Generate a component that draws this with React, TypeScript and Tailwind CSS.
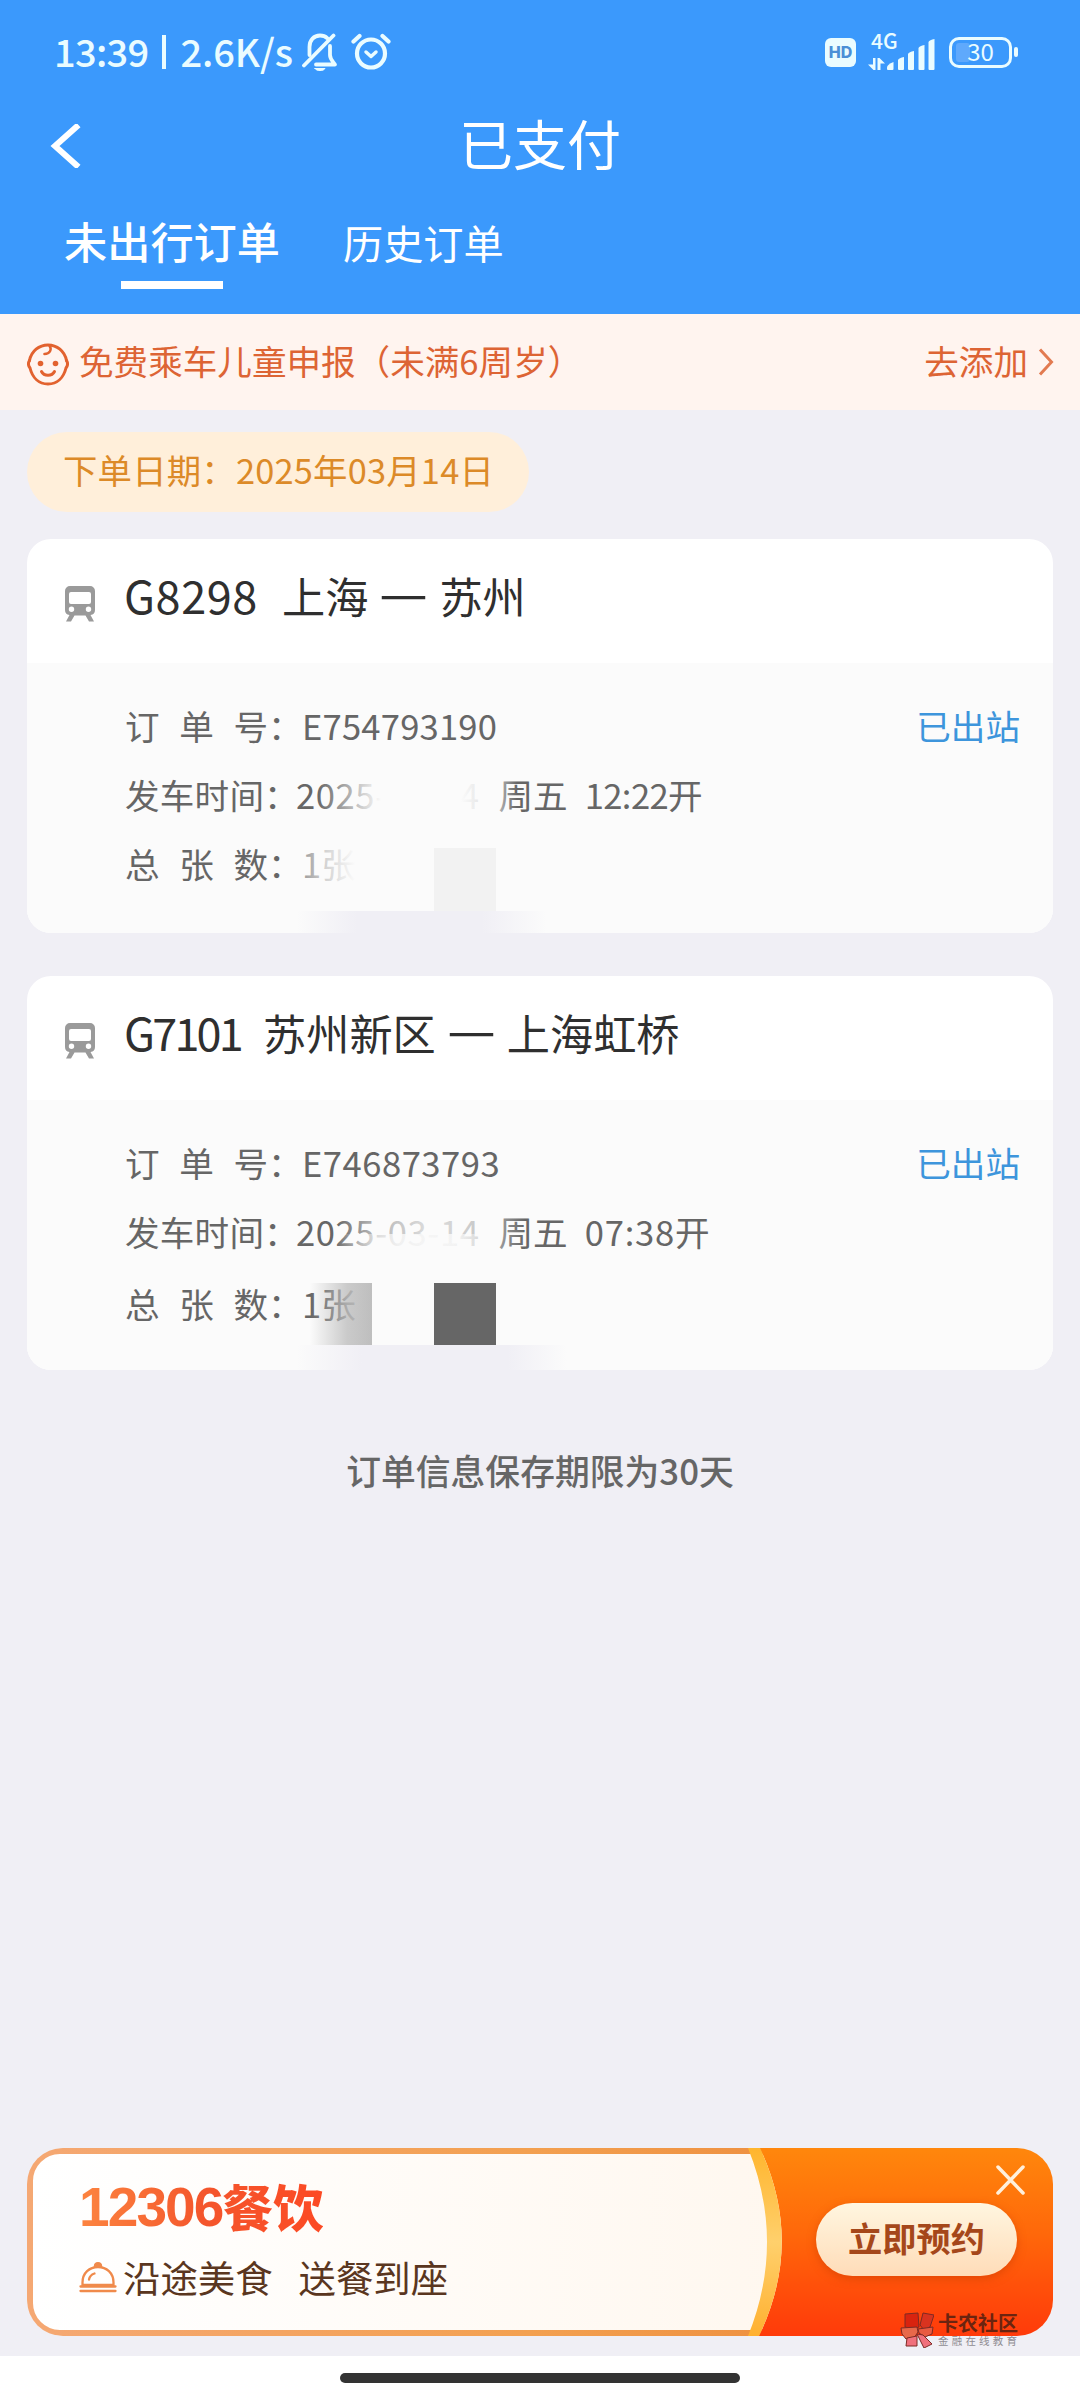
import type { ReactNode } from "react";

type Order = {
  train: string;
  trainClass: string;
  from: string;
  to: string;
  orderNo: string;
  orderNoClass: string;
  date: string;
  time: string;
  timeClass: string;
  count: string;
};

const orders: Order[] = [
  {
    train: "G8298",
    trainClass: "w-[136px] tracking-[0.6px]",
    from: "上海",
    to: "苏州",
    orderNo: "E754793190",
    orderNoClass: "tracking-[0.2px]",
    date: "2025-03-14",
    time: "12:22开",
    timeClass: "tracking-[-0.6px]",
    count: "1张",
  },
  {
    train: "G7101",
    trainClass: "w-[117px] tracking-[-2.8px]",
    from: "苏州新区",
    to: "上海虹桥",
    orderNo: "E746873793",
    orderNoClass: "tracking-[0.5px]",
    date: "2025-03-14",
    time: "07:38开",
    timeClass: "tracking-[0.8px]",
    count: "1张",
  },
];

function BellOffIcon() {
  return (
    <svg width="36" height="38" viewBox="0 0 36 38" fill="none" stroke="#eafcff" strokeWidth="3.8" strokeLinecap="round" strokeLinejoin="round">
      <path d="M7.5 22V14C7.500 7 12 2.500 18 2.500c3 0 5.500 1 7.500 2.800" />
      <path d="M28 13v9c0 4 2.500 6 5 9.500H14" />
      <path d="M31.500 2.500L2 32.500" />
      <path d="M13 35.500h10c-1 1.500-2.500 2-5 2s-4-.5-5-2z" fill="#eafcff" strokeWidth="1" />
    </svg>
  );
}

function AlarmIcon() {
  return (
    <svg width="40" height="38" viewBox="0 0 40 38" fill="none" stroke="#eafcff" strokeWidth="4.200" strokeLinecap="round" strokeLinejoin="round">
      <circle cx="20" cy="20.500" r="14" />
      <path d="M15 19l5 4.500 5-4.500" strokeWidth="3.500" />
      <path d="M2.500 8.500l6-5.500M37.500 8.500l-6-5.500" />
    </svg>
  );
}

function SignalIcon() {
  return (
    <svg width="68" height="36" viewBox="0 0 68 36" fill="#eafcff">
      <path d="M5 24h2.500v12H5.500L0 30.500h5zM9.500 24h2l5.500 5.500h-4.500V36h-3z" />
      <path d="M19 33.500q0-3 6.500-5.500V35a1 1 0 0 1-1 1h-4.500a1 1 0 0 1-1-1z" />
      <path d="M30 26q1-2 6-3V35a1 1 0 0 1-1 1h-4a1 1 0 0 1-1-1z" />
      <path d="M40 20q1-2 6-3V35a1 1 0 0 1-1 1h-4a1 1 0 0 1-1-1z" />
      <path d="M50.500 14q1-2 6-3V35a1 1 0 0 1-1 1h-4a1 1 0 0 1-1-1z" />
      <path d="M60.500 8q1-2 6-3V35a1 1 0 0 1-1 1h-4a1 1 0 0 1-1-1z" />
    </svg>
  );
}

function BabyIcon() {
  return (
    <svg width="42" height="43" viewBox="0 0 42 43" fill="none" stroke="#e2622f" strokeWidth="3" strokeLinecap="round">
      <path d="M2.500 17.500C4.500 8 12 2 21 2s16.500 6 18.500 15.500" />
      <path d="M2.500 17.500c-1.500 2.500-1.500 5 .5 7.500C5.500 35 12 41 21 41s15.500-6 18-16c2-2.500 2-5 .5-7.500" />
      <path d="M22.500 2.500c2.500 4 .5 8.500-5 8.500" strokeWidth="2.600" />
      <path d="M14.500 28.500c2.500 5 10.500 5 13 0" />
      <circle cx="13.500" cy="20.500" r="2.800" fill="#e2622f" stroke="none" />
      <circle cx="28.500" cy="20.500" r="2.800" fill="#e2622f" stroke="none" />
    </svg>
  );
}

function TrainIcon() {
  return (
    <svg width="30" height="36" viewBox="0 0 30 36">
      <path
        fill="#9a9a9a"
        fillRule="evenodd"
        d="M5 0h20a5 5 0 0 1 5 5v19a5 5 0 0 1-4.500 5l3.500 6.500h-5l-3.500-6H9.500l-3.500 6H1L4.500 29A5 5 0 0 1 0 24V5a5 5 0 0 1 5-5zM6 6a2 2 0 0 0-2 2v8a2 2 0 0 0 2 2h18a2 2 0 0 0 2-2V8a2 2 0 0 0-2-2zM6.500 20.500a2.700 2.700 0 1 0 0 5.400 2.700 2.700 0 0 0 0-5.400zM23.500 20.500a2.700 2.700 0 1 0 0 5.400 2.700 2.700 0 0 0 0-5.400z"
      />
    </svg>
  );
}

function DishIcon() {
  return (
    <svg width="38" height="32" viewBox="0 0 38 32" fill="none" stroke="#f08a4b" strokeWidth="2.300" strokeLinecap="round">
      <path d="M3.500 24v-2.500C3.500 12 10.500 6 19 6s15.500 6 15.500 15.500V24z" />
      <path d="M15.500 5.500c0-5 7-5 7 0z" fill="#f08a4b" strokeWidth="1.500" />
      <path d="M10 18.500c.5-3 2.500-5 5.500-6" />
      <path d="M1.500 25.500h35M1.500 30h35" />
    </svg>
  );
}

function WatermarkLogo() {
  return (
    <svg width="34" height="36" viewBox="0 0 34 36" stroke="#7d2a24" strokeWidth="1">
      <path d="M5 2l13-1 1 14-6 2-8-2z" fill="#d9230f" />
      <path d="M20 13l3-12 11 2-4 12-6 3z" fill="#d9331f" />
      <path d="M1 16l16-1 1 5-4 6-8 1-4-5z" fill="#e8684a" />
      <path d="M18 17l15-2-1 7-7 3-6-4z" fill="#e85a41" />
      <path d="M7 26l10-2v10H6z" fill="#f0707c" />
      <path d="M17 22l6 1 9 9-8 4z" fill="#f0707c" />
    </svg>
  );
}

function StatusBar() {
  return (
    <div className="flex h-[104px] items-start justify-between pl-[54px] pr-[62px] pt-[32px] text-[#eafcff]">
      <div className="flex h-[40px] items-center">
        <span className="-mt-[3px] text-[38px] font-medium leading-[40px] tracking-[-0.7px]">13:39</span>
        <span className="ml-[14px] h-[34px] w-[4px] bg-[#eafcff]" />
        <span className="-mt-[3px] ml-[14px] text-[38px] font-medium leading-[40px] tracking-[-0.1px]">2.6K/s</span>
        <span className="ml-[9px]"><BellOffIcon /></span>
        <span className="ml-[13px]"><AlarmIcon /></span>
      </div>
      <div className="flex h-[40px] items-center">
        <span className="flex h-[29px] w-[31px] items-center justify-center rounded-[6px] bg-[#eafcff] font-[Inter] text-[16px] font-extrabold text-[#4b8fd6]">
          HD
        </span>
        <div className="relative ml-[12px] h-[36px] w-[68px]">
          <SignalIcon />
          <span className="absolute left-[3px] top-[-2px] text-[21px] font-medium leading-[16px]">4G</span>
        </div>
        <span className="relative ml-[13px] flex h-[31px] w-[63px] items-center justify-center rounded-[10px] border-[3px] border-[#eafcff] text-[24px] leading-[30px]">
          <span className="absolute left-[4px] top-[3px] h-[19px] w-[14px] rounded-[3px] bg-[#5fa9fc]" />
          <span className="relative -mt-[2px]">30</span>
        </span>
        <span className="ml-[2px] h-[10px] w-[4px] rounded-[2px] bg-[#eafcff]" />
      </div>
    </div>
  );
}

function Header() {
  return (
    <header className="h-[314px] bg-[#3b99fc] text-white">
      <StatusBar />
      <div className="relative flex h-[84px] items-center justify-center">
        <svg className="absolute left-[50px] top-[20px]" width="32" height="44" viewBox="0 0 32 44" fill="none" stroke="#fff" strokeWidth="6">
          <path d="M28.500 1L5 22l23.500 21" />
        </svg>
        <h1 className="-mt-[6px] text-[54px] leading-[84px]">已支付</h1>
      </div>
      <nav className="flex pl-[64px]">
        <div className="flex flex-col items-center">
          <span className="h-[93px] pt-[22px] text-[43.200px] font-medium leading-[60px]">未出行订单</span>
          <span className="h-[8px] w-[102px] bg-white" />
        </div>
        <span className="ml-[63px] pt-[24px] text-[40.200px] leading-[60px]">历史订单</span>
      </nav>
    </header>
  );
}

function Row({ label, narrow, children }: { label: string; narrow?: boolean; children: ReactNode }) {
  return (
    <div className="flex h-[69px] items-center">
      <span className={narrow ? "flex w-[139px] justify-between" : "flex w-[143px] justify-between"}>
        {label.split("").map((c) => (
          <span key={c}>{c}</span>
        ))}
      </span>
      <span className={narrow ? "w-[32px]" : "w-[34px]"}>：</span>
      {children}
    </div>
  );
}

function OrderCard({ order, children, lastRow }: { order: Order; children?: ReactNode; lastRow?: string }) {
  return (
    <section className="relative h-[394px] overflow-hidden rounded-[24px] bg-white">
      <div className="flex h-[124px] pl-[38px]">
        <span className="mt-[47px]"><TrainIcon /></span>
        <h2 className="ml-[29px] flex text-[43.200px] leading-[112px] text-[#2f2f2f]">
          <span className={`text-[45px] ${order.trainClass}`}>{order.train}</span>
          <span className="ml-[22px]">{order.from}</span>
          <span className="-mt-[4px] flex w-[71px] justify-center">
            <span className="scale-x-[1.25] font-medium">—</span>
          </span>
          <span>{order.to}</span>
        </h2>
      </div>
      <div className="relative h-[270px] bg-[#fbfbfb] pl-[98px] pt-[28px] text-[34.600px] leading-[69px] text-[#666]">
        <Row label="订单号">
          <span className={order.orderNoClass}>{order.orderNo}</span>
          <span className="ml-auto mr-[33px] text-[#3d95dc]">已出站</span>
        </Row>
        <Row label="发车时间" narrow>
          <span className="tracking-[0.6px]">{order.date}</span>
          <span className="ml-[19px]">周五</span>
          <span className={`ml-[17px] ${order.timeClass}`}>{order.time}</span>
        </Row>
        <div className={lastRow}>
          <Row label="总张数">{order.count}</Row>
        </div>
      </div>
      {children}
    </section>
  );
}

function FoodBanner() {
  return (
    <div className="relative h-[188px] w-[1026px] overflow-hidden rounded-[36px]">
      <svg className="absolute inset-0" width="1026" height="188" viewBox="0 0 1026 188">
        <defs>
          <linearGradient id="edge" x1="0" x2="1" y1="0" y2="0">
            <stop offset="0" stopColor="#f5a873" />
            <stop offset="0.500" stopColor="#f3a050" />
            <stop offset="0.750" stopColor="#ee9040" />
          </linearGradient>
          <linearGradient id="cream" x1="0" x2="1" y1="0" y2="0">
            <stop offset="0" stopColor="#ffffff" />
            <stop offset="1" stopColor="#fff5ea" />
          </linearGradient>
          <linearGradient id="hot" x1="0" x2="0" y1="0" y2="1">
            <stop offset="0" stopColor="#ff870c" />
            <stop offset="0.450" stopColor="#ff680a" />
            <stop offset="1" stopColor="#ff3a0a" />
          </linearGradient>
          <linearGradient id="gold" x1="0" x2="0" y1="0" y2="1">
            <stop offset="0" stopColor="#ffb52e" />
            <stop offset="0.500" stopColor="#ffd06c" />
            <stop offset="1" stopColor="#ffb030" />
          </linearGradient>
        </defs>
        <rect x="3" y="3" width="1000" height="182" rx="30" fill="url(#cream)" stroke="url(#edge)" strokeWidth="6" />
        <path d="M733 0H1026V188H732Q777 94 733 0z" fill="url(#hot)" />
        <path d="M721 0H733Q777 94 732 188H721Q759 94 721 0z" fill="url(#gold)" />
        <path d="M971 19l25 26M996 19l-25 26" stroke="#fff0dc" strokeWidth="3.500" strokeLinecap="round" />
      </svg>
      <div className="relative flex h-full">
        <div className="w-[789px] pl-[52px] pt-[22px]">
          <div className="flex w-fit bg-gradient-to-r from-[#fc8440] via-[#f4562c] to-[#fc4a24] bg-clip-text leading-[70px] text-transparent">
            <span className="pt-[2px] font-['Liberation_Sans'] text-[55px] font-bold tracking-[-1.900px]">12306</span>
            <span className="text-[50.500px] font-black">餐饮</span>
          </div>
          <div className="mt-[10px] flex items-center text-[37.400px] leading-[50px] text-[#5a3620]">
            <DishIcon />
            <span className="ml-[6px]">沿途美食</span>
            <span className="ml-[26px]">送餐到座</span>
          </div>
        </div>
        <button className="mt-[55px] h-[73px] w-[201px] rounded-full bg-gradient-to-b from-[#fff6e0] to-[#ffdcb8] pb-[4px] text-[34.200px] font-bold leading-[69px] text-[#a5471a] shadow-[0_3px_8px_rgba(200,60,0,0.5)]">
          立即预约
        </button>
      </div>
    </div>
  );
}

export default function App() {
  return (
    <main className="relative flex h-[2400px] w-[1080px] flex-col overflow-hidden bg-[#f0eff5] font-['Noto_Sans_CJK_SC',sans-serif]">
      <Header />

      <div className="flex h-[96px] items-center bg-[#fff4ef] pl-[27px] pr-[26px] text-[34.600px] text-[#dd6434]">
        <span className="mt-[4px]"><BabyIcon /></span>
        <span className="-mt-[4px] ml-[10px] leading-[92px]">免费乘车儿童申报（未满6周岁）</span>
        <span className="-mt-[4px] ml-auto leading-[92px]">去添加</span>
        <svg className="ml-[10px]" width="16" height="28" viewBox="0 0 16 28" fill="none" stroke="#e27a50" strokeWidth="3">
          <path d="M2 1.500L13.500 14 2 26.500" />
        </svg>
      </div>

      <div className="ml-[27px] mt-[22px] flex h-[80px] w-[502px] items-center rounded-full bg-[#ffefda] pb-[5px] pl-[36px] text-[34.400px] leading-[75px] tracking-[0.2px] text-[#dc8a28]">
        下单日期：2025年03月14日
      </div>

      <div className="mt-[27px] flex flex-col gap-[43px] px-[27px]">
        <OrderCard order={orders[0]}>
          <span className="absolute left-[290px] top-[236px] h-[46px] w-[200px] bg-linear-[90deg,transparent,#fbfbfb_32%,#fbfbfb_72%,#fbfbfbcc_86%,transparent]" />
          <span className="absolute left-[270px] top-[300px] h-[56px] w-[90px] bg-linear-[90deg,#fbfbfb44,#fbfbfbbb_32%,#fbfbfb_65%]" />
          <span className="absolute left-[407px] top-[309px] h-[63px] w-[62px] bg-[#f2f2f2]" />
          <span className="absolute bottom-0 left-[270px] h-[22px] w-[250px] bg-linear-[90deg,transparent,#f0eff5_24%,#f0eff5_74%,transparent]" />
        </OrderCard>
        <OrderCard order={orders[1]} lastRow="pt-[3px]">
          <span className="absolute left-[308px] top-[236px] h-[46px] w-[190px] bg-linear-[90deg,transparent,#fbfbfb88_20%,#fbfbfbcc_50%,#fbfbfbaa_75%,transparent]" />
          <span className="absolute left-[308px] top-[258px] h-[26px] w-[160px] bg-linear-[90deg,transparent,#fbfbfbcc_40%,#fbfbfbcc_75%,transparent]" />
          <span className="absolute left-[283px] top-[307px] h-[62px] w-[62px] bg-linear-[90deg,transparent,#bebebecc_60%,#bebebe]" />
          <span className="absolute left-[407px] top-[307px] h-[62px] w-[62px] bg-[#666]" />
          <span className="absolute bottom-0 left-[270px] h-[25px] w-[270px] bg-linear-[90deg,transparent,#f0eff5_24%,#f0eff5_78%,transparent]" />
        </OrderCard>
      </div>

      <p className="mt-[70px] text-center text-[34.800px] font-medium leading-[60px] text-[#666]">
        订单信息保存期限为30天
      </p>

      <div className="mb-[20px] ml-[27px] mt-auto">
        <FoodBanner />
      </div>

      <div className="flex h-[44px] justify-center bg-white pt-[17px]">
        <span className="h-[10px] w-[400px] rounded-full bg-[#333]" />
      </div>

      <div className="absolute left-[900px] top-[2312px] flex">
        <WatermarkLogo />
        <div className="ml-[4px]">
          <div className="text-[20px] font-bold leading-[22px] text-[#6b2410]">卡农社区</div>
          <div className="text-[10.500px] leading-[14px] tracking-[3.200px] text-[#8f8c92]">金融在线教育</div>
        </div>
      </div>
    </main>
  );
}
